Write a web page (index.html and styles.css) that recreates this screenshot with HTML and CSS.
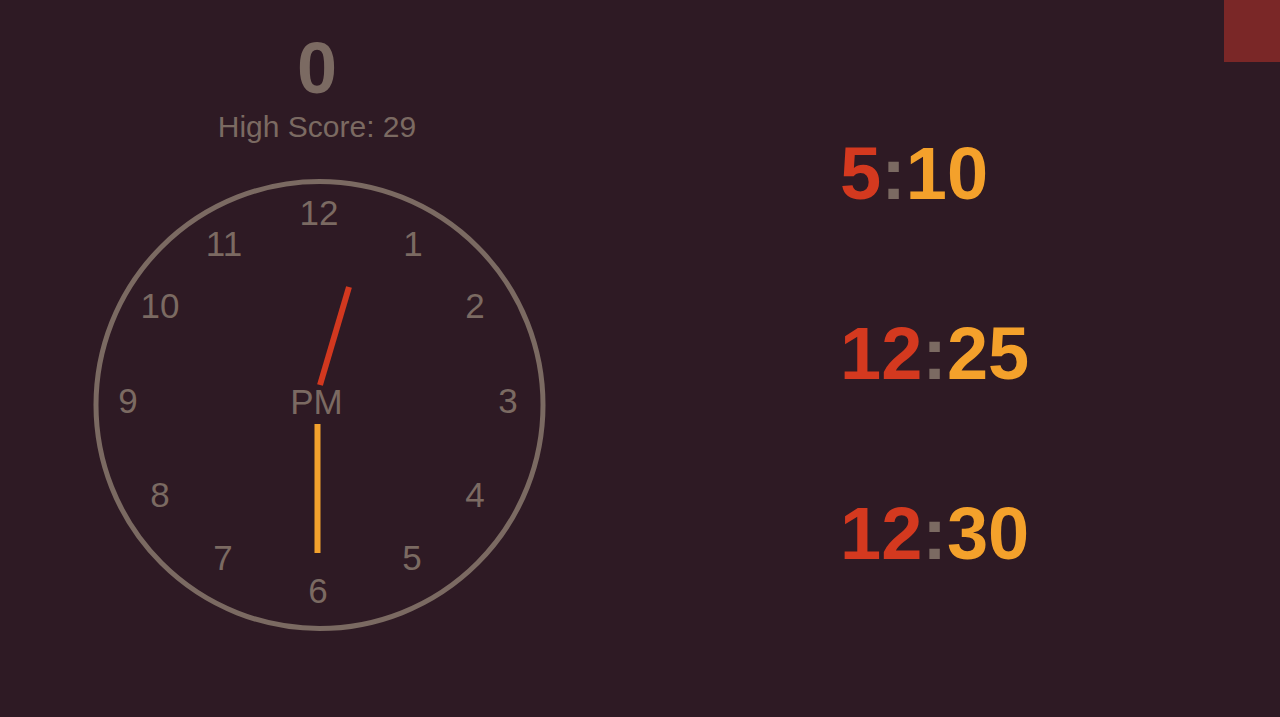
FILE: index.html
```html
<!DOCTYPE html>
<html lang="en">
<head>
<meta charset="utf-8">
<title>Clock Game</title>
<link rel="stylesheet" href="styles.css">
</head>
<body>
<div class="app">
  <div class="left">
    <div class="score">0</div>
    <div class="high">High Score: 29</div>
    <svg class="clock" width="460" height="460" viewBox="0 0 460 460">
      <circle cx="230.5" cy="230" r="223.5" fill="none" stroke="#7b6a62" stroke-width="5"/>
      <g class="nums">
        <text x="230" y="49.5">12</text>
        <text x="324" y="80.5">1</text>
        <text x="386" y="142.5">2</text>
        <text x="419" y="237.5">3</text>
        <text x="386" y="331.5">4</text>
        <text x="323" y="394.5">5</text>
        <text x="229" y="427.5">6</text>
        <text x="134" y="394.5">7</text>
        <text x="71" y="331.5">8</text>
        <text x="39" y="237.5">9</text>
        <text x="71" y="142.5">10</text>
        <text x="135" y="80.5">11</text>
        <text x="227.5" y="239">PM</text>
      </g>
      <line x1="231" y1="210" x2="260" y2="112" stroke="#d2381f" stroke-width="6"/>
      <line x1="228.5" y1="249" x2="228.5" y2="378" stroke="#f2a12d" stroke-width="6"/>
    </svg>
  </div>
  <div class="right">
    <div class="time"><span class="h">5</span><span class="c">:</span><span class="m">10</span></div>
    <div class="time"><span class="h">12</span><span class="c">:</span><span class="m">25</span></div>
    <div class="time"><span class="h">12</span><span class="c">:</span><span class="m">30</span></div>
  </div>
</div>
<div class="corner"></div>
</body>
</html>
```
FILE: styles.css
```css
html, body {
  margin: 0;
  padding: 0;
  height: 100%;
}
body {
  background: #2e1a24;
  font-family: "Liberation Sans", Arial, sans-serif;
  color: #7b6a62;
  overflow: hidden;
}
.app {
  display: flex;
  height: 717px;
}
.left {
  width: 638px;
  display: flex;
  flex-direction: column;
  align-items: center;
}
.score {
  margin-top: 32px;
  margin-right: 4px;
  font-size: 72px;
  line-height: 72px;
  font-weight: bold;
}
.high {
  margin-top: 8px;
  margin-right: 4px;
  font-size: 30px;
  line-height: 30px;
}
.clock {
  margin-top: 33px;
  display: block;
}
.nums text {
  font-family: "Liberation Sans", Arial, sans-serif;
  font-size: 35px;
  fill: #7b6a62;
  text-anchor: middle;
}
.right {
  padding-left: 202px;
  padding-top: 137px;
  display: flex;
  flex-direction: column;
  gap: 106px;
}
.time {
  font-size: 74px;
  line-height: 74px;
  font-weight: bold;
}
.h { color: #d4391f; }
.c { color: #7b6a62; }
.m { color: #f4a12b; }
.corner {
  position: absolute;
  top: 0;
  right: 0;
  width: 56px;
  height: 62px;
  background: #7a2727;
}
```
